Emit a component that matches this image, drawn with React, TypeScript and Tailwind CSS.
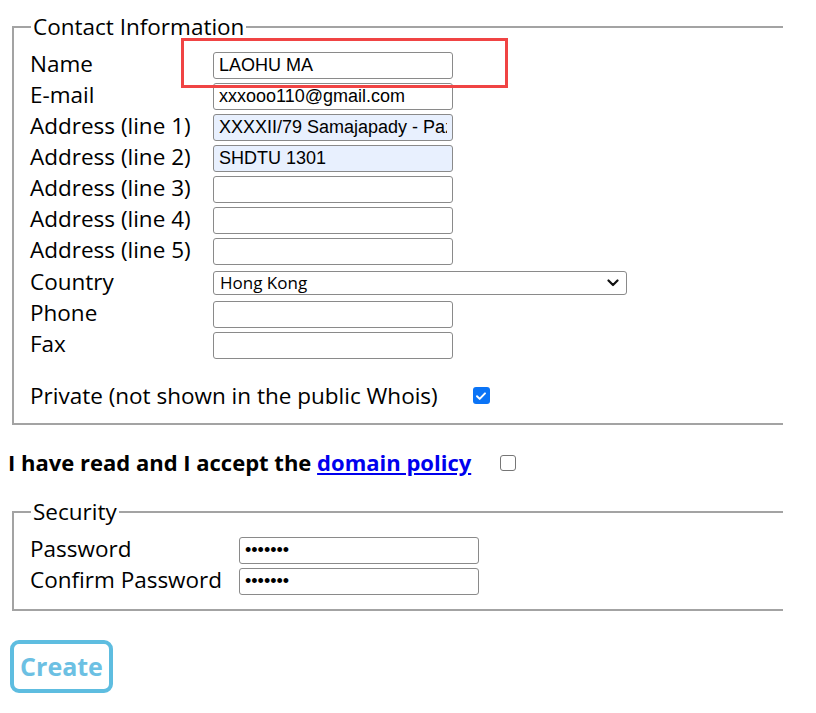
import React from "react";

const labelFont = { fontFamily: '"Open Sans", "Noto Sans", sans-serif' };

function TextRow({ label, value, tinted }: { label: string; value?: string; tinted?: boolean }) {
  return (
    <div className="flex h-[29px] items-center">
      <span className="mb-[4px] w-[183px] shrink-0 text-[22.5px] leading-[27px] text-black">{label}</span>
      <input
        readOnly
        defaultValue={value ?? ""}
        className={`h-[27px] w-[240px] rounded-[3px] border border-[#8a8a8a] px-[5px] text-[18px] text-black outline-none font-['Liberation_Sans',Arial,sans-serif] ${
          tinted ? "bg-[#e8f0fe]" : "bg-white"
        }`}
      />
    </div>
  );
}

function Checkbox({ checked }: { checked?: boolean }) {
  if (checked) {
    return (
      <span className="flex h-[17px] w-[17px] items-center justify-center rounded-[3px] bg-[#0b74f6]">
        <svg width="12" height="12" viewBox="0 0 12 12" fill="none">
          <path d="M2 6.2l2.7 2.7L10 3.4" stroke="white" strokeWidth="2" strokeLinecap="round" strokeLinejoin="round" />
        </svg>
      </span>
    );
  }
  return <span className="block h-[16px] w-[16px] rounded-[3px] border border-[#767676] bg-white" />;
}

export default function App() {
  return (
    <div className="relative min-h-screen bg-white text-black" style={labelFont}>
      <div className="pl-2 pt-[13px]">
        <fieldset className="ml-1 w-[771px] border-2 border-r-0 border-[#a3a3a3] pl-4 pt-[11px] pb-[13px]">
          <legend className="ml-[1px] px-[2px] text-[22.5px] leading-[27px]">Contact Information</legend>
          <div className="flex flex-col gap-[2px]">
            <TextRow label="Name" value="LAOHU MA" />
            <TextRow label="E-mail" value="xxxooo110@gmail.com" />
            <TextRow label="Address (line 1)" value="XXXXII/79 Samajapady - Pazhanji" tinted />
            <TextRow label="Address (line 2)" value="SHDTU 1301" tinted />
            <TextRow label="Address (line 3)" />
            <TextRow label="Address (line 4)" />
            <TextRow label="Address (line 5)" />
            <div className="flex h-[30px] items-center">
              <span className="mb-[4px] w-[183px] shrink-0 text-[22.5px] leading-[27px]">Country</span>
              <div className="relative h-[24px] w-[414px]">
                <select
                  defaultValue="Hong Kong"
                  className="h-full w-full appearance-none rounded-[3px] border border-[#8a8a8a] bg-white pl-[6px] text-[17px] leading-[20px] text-black outline-none"
                >
                  <option>Hong Kong</option>
                </select>
                <svg
                  className="pointer-events-none absolute right-[8px] top-[8px]"
                  width="12"
                  height="8"
                  viewBox="0 0 12 8"
                  fill="none"
                >
                  <path d="M1.5 1.5L6 6l4.5-4.5" stroke="#111" strokeWidth="2.2" strokeLinecap="round" strokeLinejoin="round" />
                </svg>
              </div>
            </div>
            <TextRow label="Phone" />
            <TextRow label="Fax" />
            <div className="mt-[19px] flex h-[29px] items-center">
              <span className="text-[22.5px] leading-[27px]">Private (not shown in the public Whois)</span>
              <span className="ml-[35px]">
                <Checkbox checked />
              </span>
            </div>
          </div>
        </fieldset>

        <div className="mt-[24px] flex h-[27px] items-center">
          <span className="text-[22px] font-bold leading-[27px]">
            I have read and I accept the{" "}
            <a href="#" className="text-[#0000ee] underline">
              domain policy
            </a>
          </span>
          <span className="ml-[29px]">
            <Checkbox />
          </span>
        </div>

        <fieldset className="ml-1 mt-[22px] w-[771px] border-2 border-r-0 border-[#a3a3a3] pl-4 pt-[11px] pb-[13px]">
          <legend className="ml-[1px] px-[2px] text-[22.5px] leading-[27px]">Security</legend>
          <div className="flex flex-col gap-[2px]">
            {["Password", "Confirm Password"].map((l) => (
              <div key={l} className="flex h-[29px] items-center">
                <span className="mb-[4px] w-[209px] shrink-0 text-[22.5px] leading-[27px]">{l}</span>
                <input
                  type="password"
                  readOnly
                  defaultValue="1234567"
                  className="h-[27px] w-[240px] rounded-[3px] border border-[#8a8a8a] bg-white px-[5px] text-[18px] outline-none font-['Liberation_Sans',Arial,sans-serif]"
                />
              </div>
            ))}
          </div>
        </fieldset>

        <button
          type="button"
          className="ml-[2px] mt-[29px] flex h-[53px] w-[103px] items-center justify-center rounded-[9px] border-4 border-[#5ebde0] bg-white text-[25px] font-bold text-[#6cc0e3]"
        >
          Create
        </button>
      </div>

      <div className="pointer-events-none absolute left-[181px] top-[38px] h-[50px] w-[327px] border-[3px] border-[#f04444]" />
    </div>
  );
}
